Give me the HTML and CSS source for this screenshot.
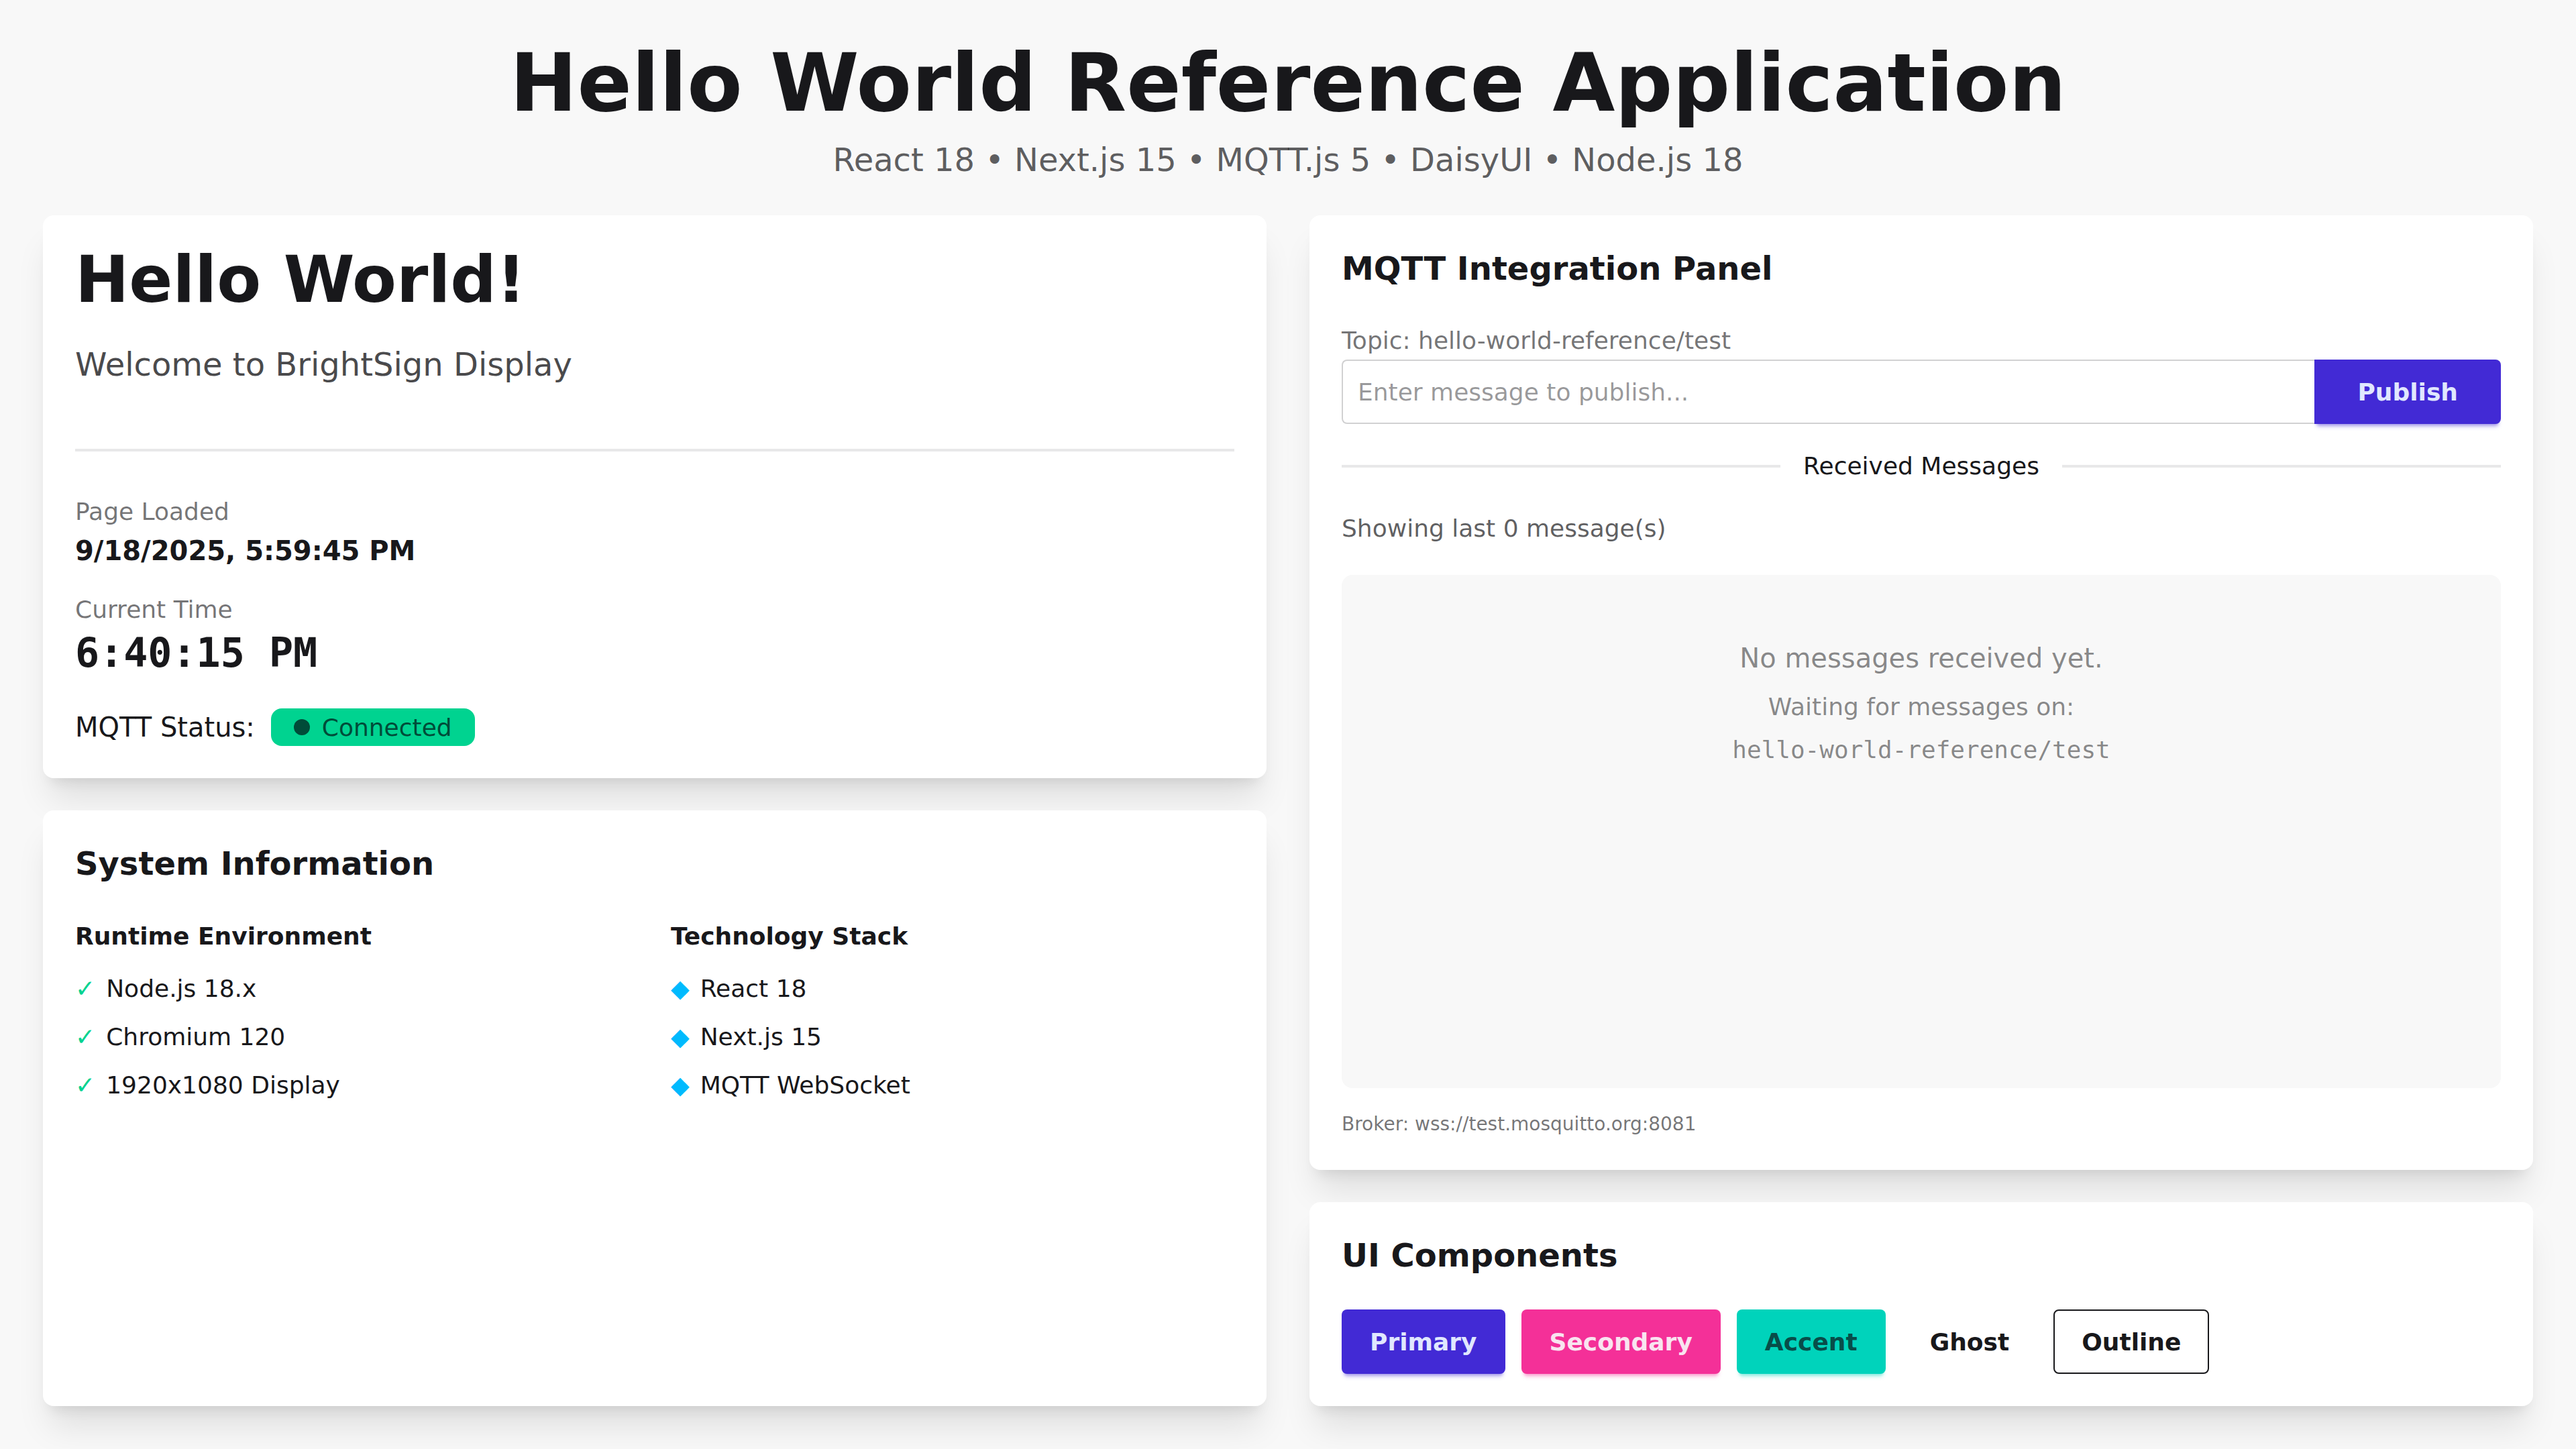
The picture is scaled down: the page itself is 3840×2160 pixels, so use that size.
FILE: index.html
```html
<!DOCTYPE html>
<html lang="en">
<head>
<meta charset="utf-8">
<title>Hello World Reference Application</title>
<link rel="stylesheet" href="styles.css">
</head>
<body>
<main class="page">
  <header class="header">
    <h1 class="app-title">Hello World Reference Application</h1>
    <p class="app-subtitle">React 18 • Next.js 15 • MQTT.js 5 • DaisyUI • Node.js 18</p>
  </header>
  <div class="grid">
    <div class="column">
      <section class="card">
        <h2 class="hello-title">Hello World!</h2>
        <p class="hello-sub">Welcome to BrightSign Display</p>
        <div class="rule"></div>
        <div class="stat">
          <div class="stat-label">Page Loaded</div>
          <div class="stat-value">9/18/2025, 5:59:45 PM</div>
        </div>
        <div class="stat stat-time">
          <div class="stat-label">Current Time</div>
          <div class="clock">6:40:15 PM</div>
        </div>
        <div class="status-row">
          <span class="status-label">MQTT Status:</span>
          <span class="badge"><span class="badge-dot"></span>Connected</span>
        </div>
      </section>
      <section class="card grow">
        <h3 class="card-title">System Information</h3>
        <div class="sys-grid">
          <div>
            <h4 class="sys-heading">Runtime Environment</h4>
            <ul class="sys-list">
              <li><span class="check">✓</span>Node.js 18.x</li>
              <li><span class="check">✓</span>Chromium 120</li>
              <li><span class="check">✓</span>1920x1080 Display</li>
            </ul>
          </div>
          <div>
            <h4 class="sys-heading">Technology Stack</h4>
            <ul class="sys-list">
              <li><span class="diamond">◆</span>React 18</li>
              <li><span class="diamond">◆</span>Next.js 15</li>
              <li><span class="diamond">◆</span>MQTT WebSocket</li>
            </ul>
          </div>
        </div>
      </section>
    </div>
    <div class="column">
      <section class="card grow mqtt">
        <h3 class="card-title">MQTT Integration Panel</h3>
        <label class="topic-label" for="msg">Topic: hello-world-reference/test</label>
        <div class="join">
          <input id="msg" class="msg-input" type="text" placeholder="Enter message to publish...">
          <button class="btn btn-primary publish">Publish</button>
        </div>
        <div class="divider">Received Messages</div>
        <p class="showing">Showing last 0 message(s)</p>
        <div class="msg-box">
          <p class="empty-title">No messages received yet.</p>
          <p class="empty-sub">Waiting for messages on:</p>
          <p class="empty-topic">hello-world-reference/test</p>
        </div>
        <p class="broker">Broker: wss://test.mosquitto.org:8081</p>
      </section>
      <section class="card">
        <h3 class="card-title">UI Components</h3>
        <div class="btn-row">
          <button class="btn btn-primary">Primary</button>
          <button class="btn btn-secondary">Secondary</button>
          <button class="btn btn-accent">Accent</button>
          <button class="btn btn-ghost">Ghost</button>
          <button class="btn btn-outline">Outline</button>
        </div>
      </section>
    </div>
  </div>
</main>
</body>
</html>
```

FILE: styles.css
```css
* { box-sizing: border-box; margin: 0; padding: 0; }
html, body { height: 100%; }
body {
  background: #f8f8f8;
  color: #18181b;
  font-family: "DejaVu Sans", sans-serif;
}
.page {
  height: 2160px;
  padding: 64px;
  display: flex;
  flex-direction: column;
}
.header { text-align: center; margin-bottom: 51px; }
.app-title { font-size: 120px; line-height: 120px; font-weight: 700; margin-bottom: 22px; }
.app-subtitle { font-size: 48px; line-height: 64px; color: rgba(24, 24, 27, 0.7); }

.grid {
  flex: 1;
  display: grid;
  grid-template-columns: 1fr 1fr;
  gap: 64px;
  min-height: 0;
}
.column { display: flex; flex-direction: column; gap: 48px; min-height: 0; }
.card {
  background: #fff;
  border-radius: 16px;
  padding: 48px;
  box-shadow: 0 40px 50px -10px rgba(0, 0, 0, 0.1), 0 16px 20px -12px rgba(0, 0, 0, 0.1);
}
.grow { flex: 1; }

.hello-title { font-size: 96px; line-height: 96px; font-weight: 700; }
.hello-sub { font-size: 48px; line-height: 64px; color: rgba(24, 24, 27, 0.8); margin-top: 46px; }
.rule { height: 4px; background: #e8e8e9; margin-top: 94px; }
.stat { margin-top: 62px; }
.stat-time { margin-top: 32px; }
.stat-label { font-size: 36px; line-height: 56px; color: rgba(24, 24, 27, 0.6); }
.stat-value { font-size: 40px; line-height: 56px; font-weight: 700; margin-top: 2px; }
.clock { font-family: "DejaVu Sans Mono", monospace; font-size: 60px; line-height: 72px; font-weight: 700; }
.status-row { display: flex; align-items: center; gap: 24px; margin-top: 47px; }
.status-label { font-size: 40px; line-height: 56px; }
.badge {
  display: inline-flex;
  align-items: center;
  gap: 18px;
  height: 56px;
  padding: 0 34px;
  border-radius: 16px;
  background: #00d390;
  color: #004c39;
  font-size: 36px;
}
.badge-dot { width: 24px; height: 24px; border-radius: 50%; background: #004c39; }

.card-title { font-size: 48px; line-height: 62px; font-weight: 700; padding-bottom: 2px; }
.sys-grid { display: grid; grid-template-columns: 1fr 1fr; gap: 48px; margin-top: 48px; }
.sys-heading { font-size: 36px; line-height: 56px; font-weight: 700; margin-bottom: 22px; }
.sys-list { list-style: none; display: flex; flex-direction: column; gap: 16px; }
.sys-list li { display: flex; align-items: center; gap: 16px; font-size: 36px; line-height: 56px; }
.check { color: #00d390; }
.diamond { color: #00bafe; }

.mqtt { display: flex; flex-direction: column; }
.topic-label { display: block; font-size: 36px; line-height: 48px; color: rgba(24, 24, 27, 0.6); margin-top: 51px; }
.join { display: flex; margin-top: 4px; height: 96px; }
.msg-input {
  flex: 1;
  min-width: 0;
  height: 96px;
  border: 2px solid #d1d1d2;
  border-right: none;
  border-radius: 8px 0 0 8px;
  padding: 0 22px;
  font-family: inherit;
  font-size: 36px;
  color: #18181b;
  background: #fff;
  outline: none;
}
.msg-input::placeholder { color: rgba(24, 24, 27, 0.45); }

.btn {
  height: 96px;
  display: inline-flex;
  align-items: center;
  justify-content: center;
  padding: 0 40px;
  border: 2px solid transparent;
  border-radius: 8px;
  font-family: inherit;
  font-size: 36px;
  font-weight: 700;
  background: transparent;
  color: #18181b;
}
.btn-primary { background: #422ad5; color: #e0e7ff; box-shadow: 0 6px 4px -4px rgba(66, 42, 213, 0.35), 0 8px 6px -4px rgba(66, 42, 213, 0.25); }
.btn-secondary { background: #f43098; color: #f9e4f0; box-shadow: 0 6px 4px -4px rgba(244, 48, 152, 0.35), 0 8px 6px -4px rgba(244, 48, 152, 0.25); }
.btn-accent { background: #00d3bb; color: #084d49; box-shadow: 0 6px 4px -4px rgba(0, 211, 187, 0.35), 0 8px 6px -4px rgba(0, 211, 187, 0.25); }
.btn-ghost { background: transparent; color: #18181b; }
.btn-outline { background: transparent; border-color: #18181b; color: #18181b; }
.publish { padding: 0 62px; border-radius: 0 8px 8px 0; }

.divider {
  display: flex;
  align-items: center;
  gap: 34px;
  margin-top: 39px;
  font-size: 36px;
  line-height: 48px;
}
.divider::before, .divider::after { content: ""; flex: 1; height: 4px; background: #e8e8e9; }
.showing { font-size: 36px; line-height: 48px; color: rgba(24, 24, 27, 0.7); margin-top: 45px; }
.msg-box {
  flex: 1;
  margin-top: 45px;
  background: #f8f8f8;
  border-radius: 16px;
  text-align: center;
  padding-top: 96px;
}
.empty-title { font-size: 40px; line-height: 56px; color: rgba(24, 24, 27, 0.5); }
.empty-sub { font-size: 36px; line-height: 48px; color: rgba(24, 24, 27, 0.5); margin-top: 21px; }
.empty-topic { font-family: "DejaVu Sans Mono", monospace; font-size: 36px; line-height: 48px; color: rgba(24, 24, 27, 0.5); margin-top: 16px; }
.broker { font-size: 28px; line-height: 40px; color: rgba(24, 24, 27, 0.6); margin-top: 34px; }

.btn-row { display: flex; gap: 24px; margin-top: 48px; }
```
